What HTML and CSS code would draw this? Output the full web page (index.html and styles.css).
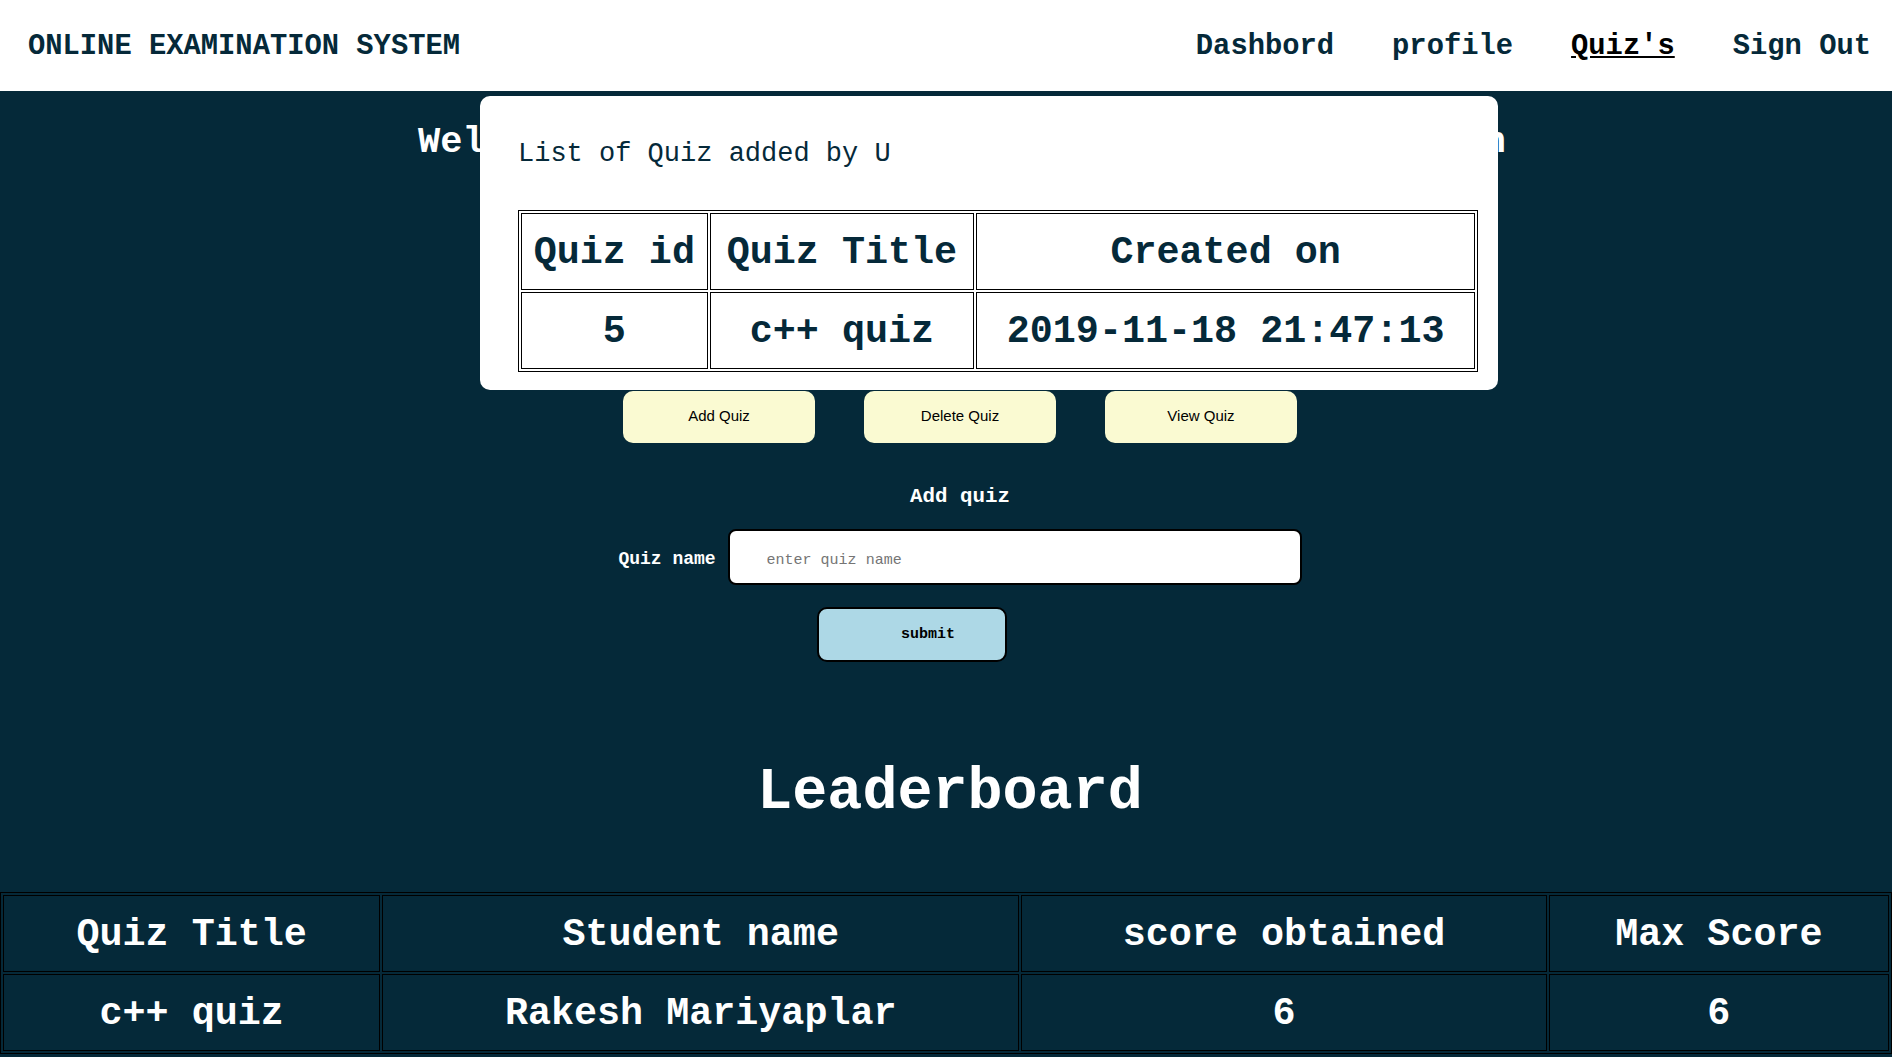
FILE: index.html
```html
<!DOCTYPE html>
<html lang="en">
<head>
<meta charset="utf-8">
<title>Online Examination System</title>
<link rel="stylesheet" href="styles.css">
</head>
<body>
<header class="topbar">
  <div class="brand">ONLINE EXAMINATION SYSTEM</div>
  <nav class="nav">
    <a class="nav-link" href="#">Dashbord</a>
    <a class="nav-link" href="#">profile</a>
    <a class="nav-link active" href="#">Quiz's</a>
    <a class="nav-link" href="#">Sign Out</a>
  </nav>
</header>
<main class="main">
  <section class="quiz-section">
    <h1 class="welcome">Welcome, Rakesh Mariyaplar, to Online Examination</h1>
    <div class="actions">
      <button class="action-btn" type="button">Add Quiz</button>
      <button class="action-btn" type="button">Delete Quiz</button>
      <button class="action-btn" type="button">View Quiz</button>
    </div>
    <h3 class="form-title">Add quiz</h3>
    <form class="quiz-form">
      <div class="field">
        <label class="field-label" for="qname">Quiz name</label>
        <input class="field-input" id="qname" type="text" placeholder="enter quiz name">
      </div>
      <div class="submit-row">
        <button class="submit-btn" type="button">submit</button>
      </div>
    </form>
    <div class="modal">
      <p class="modal-title">List of Quiz added by U</p>
      <table class="modal-table">
        <tr><th>Quiz id</th><th>Quiz Title</th><th>Created on</th></tr>
        <tr><td>5</td><td>c++ quiz</td><td>2019-11-18 21:47:13</td></tr>
      </table>
    </div>
  </section>
  <h1 class="lb-title">Leaderboard</h1>
  <table class="lb-table">
    <tr><th>Quiz Title</th><th>Student name</th><th>score obtained</th><th>Max Score</th></tr>
    <tr><td>c++ quiz</td><td>Rakesh Mariyaplar</td><td>6</td><td>6</td></tr>
  </table>
</main>
</body>
</html>
```
FILE: styles.css
```css
html, body {
  margin: 0;
  padding: 0;
}
body {
  background: #052939;
  font-family: "Liberation Mono", "Courier New", monospace;
  color: #ffffff;
}
.topbar {
  background: #ffffff;
  height: 91px;
  display: flex;
  align-items: center;
  justify-content: space-between;
  padding: 0 21px 0 28px;
}
.brand {
  font-size: 28.8px;
  font-weight: bold;
  color: #052939;
  padding-top: 2px;
}
.nav {
  display: flex;
  gap: 58px;
  padding-top: 2px;
}
.nav-link {
  font-size: 28.8px;
  font-weight: bold;
  color: #052939;
  text-decoration: none;
}
.nav-link.active {
  color: #000000;
  text-decoration: underline;
}
.main {
  display: flex;
  flex-direction: column;
}
.quiz-section {
  position: relative;
  padding-left: 28px;
  display: flex;
  flex-direction: column;
  align-items: center;
}
.welcome {
  margin: 33px 0 0;
  padding-left: 4px;
  font-size: 37px;
  line-height: 37px;
  font-weight: bold;
  white-space: nowrap;
  color: #ffffff;
}
.actions {
  display: flex;
  gap: 49px;
  margin-top: 230px;
}
.action-btn {
  width: 192px;
  height: 52px;
  border: none;
  border-radius: 10px;
  background: #fafad2;
  color: #000000;
  font-family: "Liberation Sans", Arial, sans-serif;
  font-size: 15px;
  padding: 0 0 3px;
}
.form-title {
  margin: 42px 0 0;
  font-size: 20.8px;
  line-height: 24px;
  font-weight: bold;
}
.quiz-form {
  margin-top: 20px;
  display: flex;
  flex-direction: column;
  align-items: center;
  gap: 22px;
}
.field {
  display: flex;
  align-items: center;
  gap: 12px;
}
.field-label {
  font-size: 18px;
  font-weight: bold;
  padding-top: 4px;
}
.field-input {
  box-sizing: border-box;
  width: 574px;
  height: 56px;
  border: 2px solid #000000;
  border-radius: 8px;
  padding: 7px 0 0 37px;
  font-family: "Liberation Mono", "Courier New", monospace;
  font-size: 15px;
  background: #ffffff;
}
.field-input::placeholder {
  color: #757575;
}
.submit-row {
  display: flex;
  justify-content: center;
}
.submit-btn {
  box-sizing: border-box;
  width: 190px;
  height: 55px;
  margin-right: 96px;
  border: 2px solid #000000;
  border-radius: 10px;
  background: #add8e6;
  padding: 0 0 0 32px;
  font-family: "Liberation Mono", "Courier New", monospace;
  font-size: 15px;
  font-weight: bold;
  color: #000000;
}
.modal {
  position: absolute;
  left: 480px;
  top: 5px;
  width: 1018px;
  height: 294px;
  box-sizing: border-box;
  background: #ffffff;
  border-radius: 10px;
  padding: 45px 20px 0 38px;
  color: #052939;
}
.modal-title {
  margin: 0;
  font-size: 27px;
  line-height: 27px;
}
.modal-table {
  margin-top: 42px;
  width: 960px;
  border: 1px solid #000000;
  border-spacing: 2px;
  font-size: 38.4px;
  color: #052939;
}
.modal-table th, .modal-table td {
  border: 1px solid #000000;
  padding: 4px 1px 0;
  line-height: 71px;
  text-align: center;
  font-weight: bold;
  white-space: nowrap;
}
.lb-title {
  margin: 102px 0 0;
  padding-left: 8px;
  text-align: center;
  font-size: 58.4px;
  line-height: 57.6px;
  font-weight: bold;
}
.lb-table {
  margin-top: 70px;
  width: 100%;
  border: 1px solid #000000;
  border-spacing: 2px;
  font-size: 38.4px;
  color: #ffffff;
}
.lb-table th, .lb-table td {
  border: 1px solid #000000;
  padding: 3px 1px 0;
  line-height: 72px;
  text-align: center;
  font-weight: bold;
  white-space: nowrap;
}
```
